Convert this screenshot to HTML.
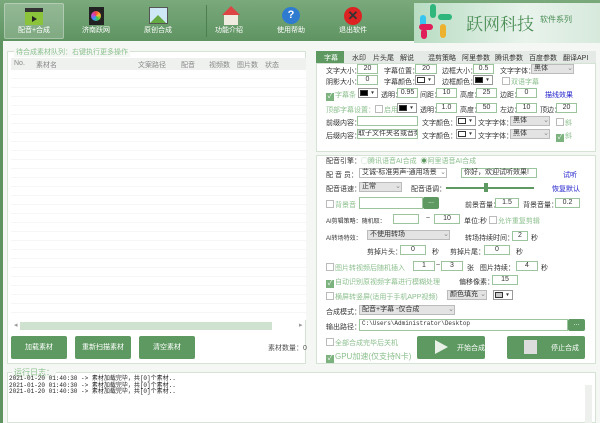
<!DOCTYPE html>
<html><head><meta charset="utf-8"><style>
*{margin:0;padding:0;box-sizing:border-box}
body{width:600px;height:423px;overflow:hidden;background:#f4f7f4;font-family:"Liberation Sans","Noto Sans CJK SC",sans-serif;font-size:7px;color:#333;position:relative}
.a{position:absolute;white-space:nowrap}
.tb{position:absolute;left:0;top:0;width:600px;height:41px;background:linear-gradient(#7aa97c,#5f9462)}
.btn{position:absolute;top:3px;width:58px;height:35px;color:#fff;text-align:center;font-size:7px}
.btn .l{position:absolute;bottom:3px;width:100%}
.in{position:absolute;height:10px;border:1px solid #9cc59e;background:#fff;font-size:7px;text-align:center;line-height:8px;white-space:nowrap}
.sel{position:absolute;height:10px;border:1px solid #bbb;background:#e3e3e3;font-size:7px;line-height:8px;padding-left:2px;white-space:nowrap}
.cb{display:inline-block;width:8px;height:8px;border:1px solid #bbb;background:#fff;vertical-align:-1px;margin-right:1px}
.cbk{display:inline-block;width:8px;height:8px;background:#7cb27e;vertical-align:-1px;margin-right:1px;color:#fff;font-size:7px;line-height:8px;text-align:center}
.g{color:#8bbf8d}
.gb{position:absolute;background:#5d9960;color:#fff;text-align:center;border-radius:2px;white-space:nowrap}
.gb span{white-space:nowrap}
.clr{position:absolute;width:20px;height:10px;border:1px solid #999;background:#fff}
.clr i{position:absolute;left:1px;top:1px;width:8px;height:6px;border:1px solid #333}
.clr b{position:absolute;right:1px;top:1px;width:7px;height:6px;font-size:5px;line-height:6px;text-align:center}
</style></head><body>
<div class="tb"></div>
<div style="position:absolute;left:0;top:41px;width:3px;height:382px;background:#5f9462"></div>
<div style="position:absolute;left:4px;top:3px;width:60px;height:36px;background:rgba(255,255,255,.2);border:1px solid rgba(255,255,255,.3);border-radius:2px"></div>
<div class="btn" style="left:5px"><div style="position:absolute;left:20px;top:5px;width:18px;height:17px;background:#8bc33a;border-top:4px solid #333"></div><div style="position:absolute;left:27px;top:13px;border-left:5px solid #222;border-top:3px solid transparent;border-bottom:3px solid transparent"></div><div class="l">配音+合成</div></div>
<div class="btn" style="left:67px"><div style="position:absolute;left:22px;top:4px;width:15px;height:18px;background:#222"></div><div style="position:absolute;left:24px;top:8px;width:10px;height:10px;border-radius:50%;background:conic-gradient(#e44,#fb3,#4c4,#39f,#c4c,#e44)"></div><div class="l">济南跃网</div></div>
<div class="btn" style="left:129px"><div style="position:absolute;left:20px;top:4px;width:19px;height:17px;background:#cfe8f5;border:1px solid #555"></div><div style="position:absolute;left:21px;top:12px;border-bottom:8px solid #6a4;border-left:8px solid transparent;border-right:8px solid transparent"></div><div class="l">原创合成</div></div>
<div style="position:absolute;left:206px;top:5px;width:1px;height:32px;background:#4d7f50"></div>
<div class="btn" style="left:200px"><div style="position:absolute;left:22px;top:3px;border-bottom:9px solid #d44;border-left:9px solid transparent;border-right:9px solid transparent"></div><div style="position:absolute;left:24px;top:12px;width:14px;height:10px;background:#f0ebe0"></div><div class="l">功能介绍</div></div>
<div class="btn" style="left:262px"><div style="position:absolute;left:20px;top:4px;width:18px;height:17px;border-radius:50%;background:#2e7bd0;color:#fff;font-size:11px;font-weight:bold;line-height:17px">?</div><div class="l">使用帮助</div></div>
<div class="btn" style="left:324px"><div style="position:absolute;left:20px;top:4px;width:18px;height:18px;border-radius:50%;background:#d22;color:#333;font-size:13px;font-weight:bold;line-height:18px">✕</div><div class="l">退出软件</div></div>
<div style="position:absolute;left:414px;top:3px;width:186px;height:40px;background:linear-gradient(90deg,#b8dcc2,#e8f3ec 60%,#d7e9dc)"></div>
<div style="position:absolute;left:421px;top:6px;width:6px;height:14px;background:#36c5f0;border-radius:3px;transform:translate(-1px,9px)"></div>
<div style="position:absolute;left:430px;top:4px;width:6px;height:14px;background:#2eb67d;border-radius:3px"></div>
<div style="position:absolute;left:438px;top:14px;width:14px;height:6px;background:#2eb67d;border-radius:3px"></div>
<div style="position:absolute;left:419px;top:24px;width:14px;height:6px;background:#e01e5a;border-radius:3px"></div>
<div style="position:absolute;left:430px;top:24px;width:6px;height:14px;background:#ecb22e;border-radius:3px;transform:translateX(10px)"></div>
<div style="position:absolute;left:421px;top:29px;width:6px;height:10px;background:#e01e5a;border-radius:3px"></div>
<div class="a" style="left:466px;top:10px;font-size:17px;color:#4e8f58;font-family:'Noto Serif CJK SC',serif">跃网科技</div>
<div class="a" style="left:540px;top:14px;font-size:8px;color:#4e8f58">软件系列</div>

<!-- left panel -->
<div style="position:absolute;left:7px;top:51px;width:299px;height:313px;border:1px solid #d5e3d5;background:#fff"></div>
<div class="a g" style="left:14px;top:47px;background:#f4f7f4;padding:0 2px">待合成素材队列：右键执行更多操作</div>
<div style="position:absolute;left:11px;top:58px;width:295px;height:12px;background:#eef1ee"></div>
<div class="a" style="left:14px;top:60px;color:#888">No.</div>
<div class="a" style="left:36px;top:60px;color:#888">素材名</div>
<div class="a" style="left:138px;top:60px;color:#888">文案路径</div>
<div class="a" style="left:181px;top:60px;color:#888">配音</div>
<div class="a" style="left:209px;top:60px;color:#888">视频数</div>
<div class="a" style="left:237px;top:60px;color:#888">图片数</div>
<div class="a" style="left:265px;top:60px;color:#888">状态</div>
<div style="position:absolute;left:11px;top:70px;width:295px;height:250px;background:repeating-linear-gradient(#fff 0 8px,#f6f6f6 8px 9px)"></div>
<div style="position:absolute;left:20px;top:322px;width:252px;height:8px;background:#cfe2d0"></div>
<div class="a" style="left:14px;top:321px;color:#999">◂</div><div class="a" style="left:299px;top:321px;color:#999">▸</div>
<div class="gb" style="left:11px;top:336px;width:56px;height:23px;line-height:23px">加载素材</div>
<div class="gb" style="left:75px;top:336px;width:56px;height:23px;line-height:23px">重新扫描素材</div>
<div class="gb" style="left:139px;top:336px;width:56px;height:23px;line-height:23px">清空素材</div>
<div class="a" style="left:268px;top:343px;color:#555">素材数量：0</div>

<!-- log -->
<div style="position:absolute;left:7px;top:372px;width:589px;height:51px;border:1px solid #d5e3d5;background:#fff"></div>
<div class="a g" style="left:12px;top:367px;background:#f4f7f4;padding:0 2px;font-size:8px">运行日志：</div>
<div class="a" style="left:9px;top:376px;font-family:'Liberation Mono','Noto Sans CJK SC',monospace;font-size:6px;line-height:6.5px;color:#222">2021-01-20 01:40:30 -&gt; 素材加载完毕，共[0]个素材..<br>2021-01-20 01:40:30 -&gt; 素材加载完毕，共[0]个素材..<br>2021-01-20 01:40:30 -&gt; 素材加载完毕，共[0]个素材..</div>
<div style="position:absolute;left:585px;top:385px;width:7px;height:38px;background:#eef0ee"></div>

<!-- tabs -->
<div style="position:absolute;left:316px;top:51px;width:280px;height:12px;background:#e6eae6"></div>
<div style="position:absolute;left:316px;top:51px;width:28px;height:12px;background:#5d9960"></div>
<div class="a" style="left:324px;top:53px;color:#fff">字幕</div>
<div class="a" style="left:352px;top:53px">水印</div>
<div class="a" style="left:373px;top:53px">片头尾</div>
<div class="a" style="left:400px;top:53px">解说</div>
<div class="a" style="left:428px;top:53px">混剪策略</div>
<div class="a" style="left:462px;top:53px">阿里参数</div>
<div class="a" style="left:495px;top:53px">腾讯参数</div>
<div class="a" style="left:529px;top:53px">百度参数</div>
<div class="a" style="left:563px;top:53px">翻译API</div>
<div style="position:absolute;left:316px;top:63px;width:280px;height:89px;border:1px solid #d5e3d5;background:#fff"></div>

<div class="a" style="left:326px;top:66px">文字大小：</div><div class="in" style="left:357px;top:64px;width:21px">20</div>
<div class="a" style="left:384px;top:66px">字幕位置：</div><div class="in" style="left:415px;top:64px;width:22px">20</div>
<div class="a" style="left:442px;top:66px">边框大小：</div><div class="in" style="left:473px;top:64px;width:21px">0.5</div>
<div class="a" style="left:500px;top:66px">文字字体：</div><div class="sel" style="left:531px;top:64px;width:43px">黑体<span style="float:right;color:#888">⌄ </span></div>

<div class="a" style="left:326px;top:77px">阴影大小：</div><div class="in" style="left:357px;top:75px;width:21px">0</div>
<div class="a" style="left:384px;top:77px">字幕颜色：</div><div class="clr" style="left:415px;top:75px"><i style="background:#fff"></i><b>▾</b></div>
<div class="a" style="left:442px;top:77px">边框颜色：</div><div class="clr" style="left:473px;top:75px"><i style="background:#000"></i><b>▾</b></div>
<div class="a g" style="left:502px;top:77px"><span class="cb"></span>双语字幕</div>

<div class="a g" style="left:326px;top:90px"><span class="cbk">✓</span>字幕条</div><div class="clr" style="left:358px;top:88px"><i style="background:#000"></i><b>▾</b></div>
<div class="a" style="left:381px;top:90px">透明：</div><div class="in" style="left:397px;top:88px;width:21px">0.95</div>
<div class="a" style="left:420px;top:90px">间距：</div><div class="in" style="left:436px;top:88px;width:21px">10</div>
<div class="a" style="left:460px;top:90px">高度：</div><div class="in" style="left:476px;top:88px;width:21px">25</div>
<div class="a" style="left:500px;top:90px">边距：</div><div class="in" style="left:516px;top:88px;width:21px">0</div>
<div class="a" style="left:545px;top:90px;color:#22c">描线效果</div>

<div class="a g" style="left:326px;top:105px">顶部字幕设置：<span class="cb"></span>启用</div><div class="clr" style="left:397px;top:103px"><i style="background:#000"></i><b>▾</b></div>
<div class="a" style="left:420px;top:105px">透明：</div><div class="in" style="left:436px;top:103px;width:21px">1.0</div>
<div class="a" style="left:460px;top:105px">高度：</div><div class="in" style="left:476px;top:103px;width:21px">50</div>
<div class="a" style="left:500px;top:105px">左边：</div><div class="in" style="left:516px;top:103px;width:21px">10</div>
<div class="a" style="left:540px;top:105px">顶边：</div><div class="in" style="left:556px;top:103px;width:21px">20</div>

<div class="a" style="left:326px;top:118px">前缀内容：</div><div class="in" style="left:357px;top:116px;width:61px"></div>
<div class="a" style="left:422px;top:118px">文字颜色：</div><div class="clr" style="left:456px;top:116px"><i style="background:#fff"></i><b>▾</b></div>
<div class="a" style="left:478px;top:118px">文字字体：</div><div class="sel" style="left:510px;top:116px;width:40px">黑体<span style="float:right;color:#888">⌄ </span></div>
<div class="a g" style="left:556px;top:118px"><span class="cb"></span>斜</div>

<div class="a" style="left:326px;top:131px">后缀内容：</div><div class="in" style="left:357px;top:129px;width:61px;text-align:left;overflow:hidden">取子文件夹名或音频</div>
<div class="a" style="left:422px;top:131px">文字颜色：</div><div class="clr" style="left:456px;top:129px"><i style="background:#fff"></i><b>▾</b></div>
<div class="a" style="left:478px;top:131px">文字字体：</div><div class="sel" style="left:510px;top:129px;width:40px">黑体<span style="float:right;color:#888">⌄ </span></div>
<div class="a g" style="left:556px;top:131px"><span class="cbk">✓</span>斜</div>

<!-- lower right -->
<div style="position:absolute;left:316px;top:155px;width:280px;height:209px;border:1px solid #d5e3d5;background:#fff"></div>
<div class="a" style="left:326px;top:156px">配音引擎：<span class="g">◯腾讯语音AI合成 &nbsp;<b style="color:#5d9960">◉</b>阿里语音AI合成</span></div>
<div class="a" style="left:326px;top:170px">配 音 员：</div><div class="sel" style="left:359px;top:168px;width:88px;background:#fff">艾诚-标准男声-通用场景<span style="float:right;color:#888">⌄ </span></div>
<div class="in" style="left:461px;top:168px;width:76px;text-align:left;padding-left:2px">你好，欢迎试听效果!</div>
<div class="a" style="left:563px;top:170px;color:#22c">试听</div>
<div class="a" style="left:326px;top:184px">配音语速：</div><div class="sel" style="left:359px;top:182px;width:43px">正常<span style="float:right;color:#888">⌄ </span></div>
<div class="a" style="left:411px;top:184px">配音语调：</div>
<div style="position:absolute;left:446px;top:187px;width:88px;height:2px;background:#5d9960"></div>
<div style="position:absolute;left:484px;top:183px;width:4px;height:9px;background:#5d9960"></div>
<div class="a" style="left:552px;top:184px;color:#22c">恢复默认</div>

<div class="a g" style="left:326px;top:200px"><span class="cb"></span>背景音</div><div class="in" style="left:359px;top:197px;width:64px;height:12px"></div>
<div class="gb" style="left:423px;top:197px;width:16px;height:12px;line-height:10px">...</div>
<div class="a" style="left:465px;top:200px">前景音量：</div><div class="in" style="left:495px;top:198px;width:24px">1.5</div>
<div class="a" style="left:523px;top:200px">背景音量：</div><div class="in" style="left:555px;top:198px;width:25px">0.2</div>

<div class="a" style="left:326px;top:216px;font-size:6px">AI剪辑策略：随机取：</div><div class="in" style="left:393px;top:214px;width:26px"></div>
<div class="a" style="left:426px;top:215px">~</div><div class="in" style="left:434px;top:214px;width:26px">10</div>
<div class="a" style="left:464px;top:216px">单位:秒 <span class="g"><span class="cb"></span>允许重复剪辑</span></div>

<div class="a" style="left:326px;top:233px;font-size:6px">AI转场特效：</div><div class="sel" style="left:367px;top:230px;width:83px">不使用转场<span style="float:right;color:#888">⌄ </span></div>
<div class="a" style="left:465px;top:233px">转场持续时间：</div><div class="in" style="left:512px;top:231px;width:16px">2</div><div class="a" style="left:531px;top:233px">秒</div>

<div class="a" style="left:367px;top:247px">剪掉片头：</div><div class="in" style="left:400px;top:245px;width:26px">0</div><div class="a" style="left:432px;top:247px">秒</div>
<div class="a" style="left:450px;top:247px">剪掉片尾：</div><div class="in" style="left:484px;top:245px;width:26px">0</div><div class="a" style="left:516px;top:247px">秒</div>

<div class="a g" style="left:326px;top:263px"><span class="cb"></span>图片转视频后随机插入</div><div class="in" style="left:413px;top:261px;width:22px">1</div>
<div class="a" style="left:436px;top:262px">~</div><div class="in" style="left:441px;top:261px;width:22px">3</div>
<div class="a" style="left:467px;top:263px">张 &nbsp;&nbsp;图片持续：</div><div class="in" style="left:516px;top:261px;width:22px">4</div><div class="a" style="left:541px;top:263px">秒</div>

<div class="a g" style="left:326px;top:277px"><span class="cbk">✓</span>自动识别原视频字幕进行模糊处理</div>
<div class="a" style="left:459px;top:277px">偏移像素：</div><div class="in" style="left:492px;top:275px;width:26px">15</div>

<div class="a g" style="left:326px;top:292px"><span class="cb"></span>横屏转竖屏(适用于手机APP视频)</div>
<div class="sel" style="left:447px;top:290px;width:40px">颜色填充<span style="float:right;color:#888">⌄ </span></div>
<div class="clr" style="left:493px;top:290px"><i style="background:#ccc"></i><b>▾</b></div>

<div class="a" style="left:326px;top:307px">合成模式：</div><div class="sel" style="left:359px;top:305px;width:96px">配音+字幕 -仅合成<span style="float:right;color:#888">⌄ </span></div>
<div class="a" style="left:326px;top:322px">输出路径：</div><div class="in" style="left:359px;top:319px;width:209px;height:12px;text-align:left;padding-left:2px;font-family:'Liberation Mono',monospace;font-size:6px">C:\Users\Administrator\Desktop</div>
<div class="gb" style="left:568px;top:319px;width:17px;height:12px;line-height:10px">...</div>

<div class="a g" style="left:326px;top:338px"><span class="cb"></span>全部合成完毕后关机</div>
<div class="a g" style="left:326px;top:351px;font-size:8px"><span class="cbk">✓</span>GPU加速(仅支持N卡)</div>
<div class="gb" style="left:417px;top:336px;width:68px;height:23px"><div style="position:absolute;left:18px;top:4px;border-left:13px solid #e8f0e8;border-top:7px solid transparent;border-bottom:7px solid transparent"></div><span style="position:absolute;left:40px;top:7px">开始合成</span></div>
<div class="gb" style="left:507px;top:336px;width:78px;height:23px"><div style="position:absolute;left:17px;top:4px;width:13px;height:14px;background:#ddd"></div><span style="position:absolute;left:44px;top:7px">停止合成</span></div>
</body></html>
